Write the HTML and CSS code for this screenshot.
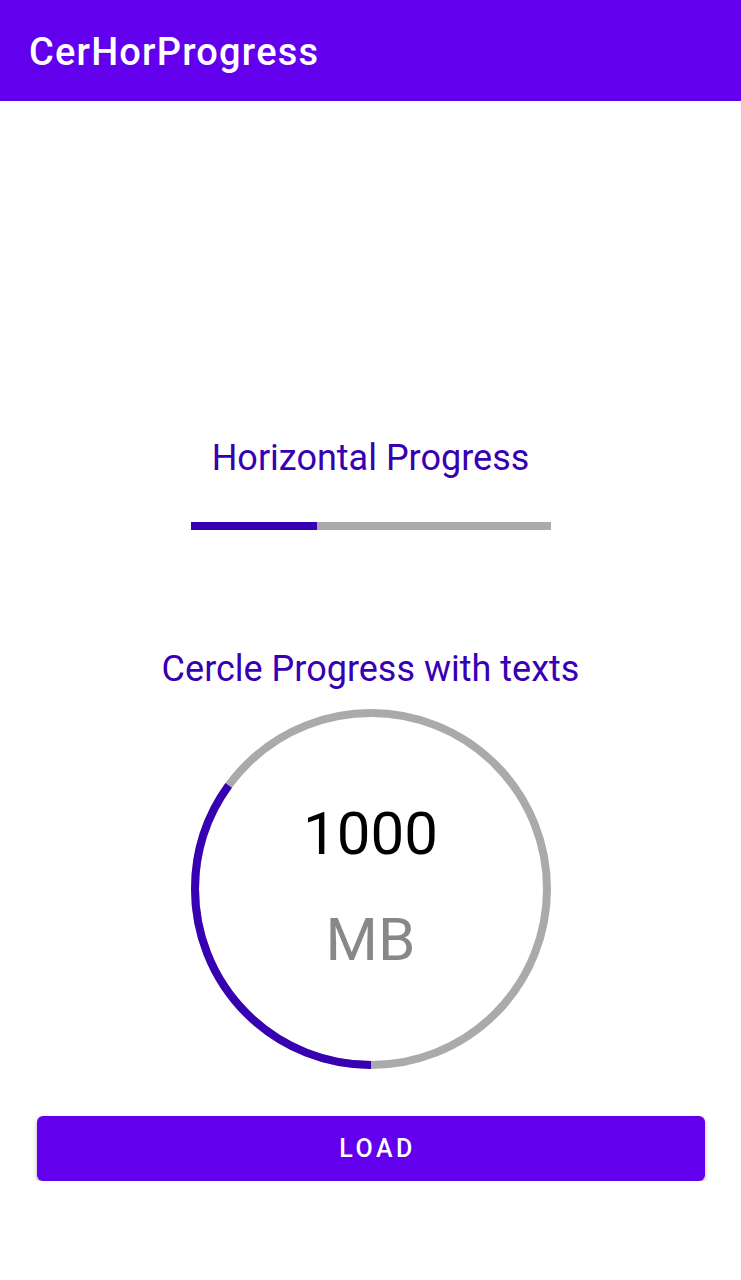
FILE: index.html
```html
<!DOCTYPE html>
<html>
<head>
<meta charset="utf-8">
<link rel="stylesheet" href="styles.css">
</head>
<body>
<header class="appbar"><h1 class="appbar-title">CerHorProgress</h1></header>
<main class="content">
  <p class="label label-hor">Horizontal Progress</p>
  <div class="hbar"><div class="hbar-fill" style="width:35%"></div></div>
  <p class="label label-circle">Cercle Progress with texts</p>
  <div class="ring">
    <svg class="ring-svg" width="360" height="360" viewBox="0 0 360 360">
      <circle cx="180" cy="180" r="176" fill="none" stroke="#aaaaaa" stroke-width="8"/>
      <circle cx="180" cy="180" r="176" fill="none" stroke="#3700b3" stroke-width="8" stroke-dasharray="387 2000" transform="rotate(90 180 180)"/>
    </svg>
    <div class="ring-text">
      <span class="ring-value">1000</span>
      <span class="ring-unit">MB</span>
    </div>
  </div>
  <button class="load-btn">LOAD</button>
</main>
</body>
</html>
```
FILE: styles.css
```css
html, body {
  margin: 0;
  padding: 0;
  background: #ffffff;
  font-family: Roboto, "Liberation Sans", sans-serif;
}
.appbar {
  height: 101px;
  box-sizing: border-box;
  background: #6200ee;
  padding: 33px 0 0 29px;
}
.appbar-title {
  margin: 0;
  font-size: 38px;
  line-height: 1;
  font-weight: 500;
  letter-spacing: 1.2px;
  color: #ffffff;
}
.content {
  display: flex;
  flex-direction: column;
  align-items: center;
}
.label {
  margin: 0;
  font-size: 36px;
  line-height: 1;
  color: #3700b3;
}
.label-hor {
  margin-top: 339px;
}
.hbar {
  margin-top: 46px;
  width: 360px;
  height: 8px;
  background: #aaaaaa;
}
.hbar-fill {
  height: 100%;
  background: #3700b3;
}
.label-circle {
  margin-top: 121px;
}
.ring {
  margin-top: 22px;
  display: grid;
  width: 360px;
  height: 360px;
}
.ring-svg {
  grid-area: 1 / 1;
  display: block;
}
.ring-text {
  grid-area: 1 / 1;
  display: flex;
  flex-direction: column;
  align-items: center;
  padding-top: 95px;
}
.ring-value {
  font-size: 60px;
  line-height: 1;
  color: #000000;
}
.ring-unit {
  margin-top: 46px;
  font-size: 60px;
  line-height: 1;
  color: #888888;
}
.load-btn {
  margin-top: 47px;
  width: 668px;
  height: 65px;
  padding: 0 0 0 14px;
  border: none;
  border-radius: 6px;
  background: #6200ee;
  color: #ffffff;
  font-family: Roboto, "Liberation Sans", sans-serif;
  font-weight: 500;
  font-size: 25px;
  letter-spacing: 3.5px;
  box-shadow: 0 2px 4px rgba(0, 0, 0, 0.3);
}
```
